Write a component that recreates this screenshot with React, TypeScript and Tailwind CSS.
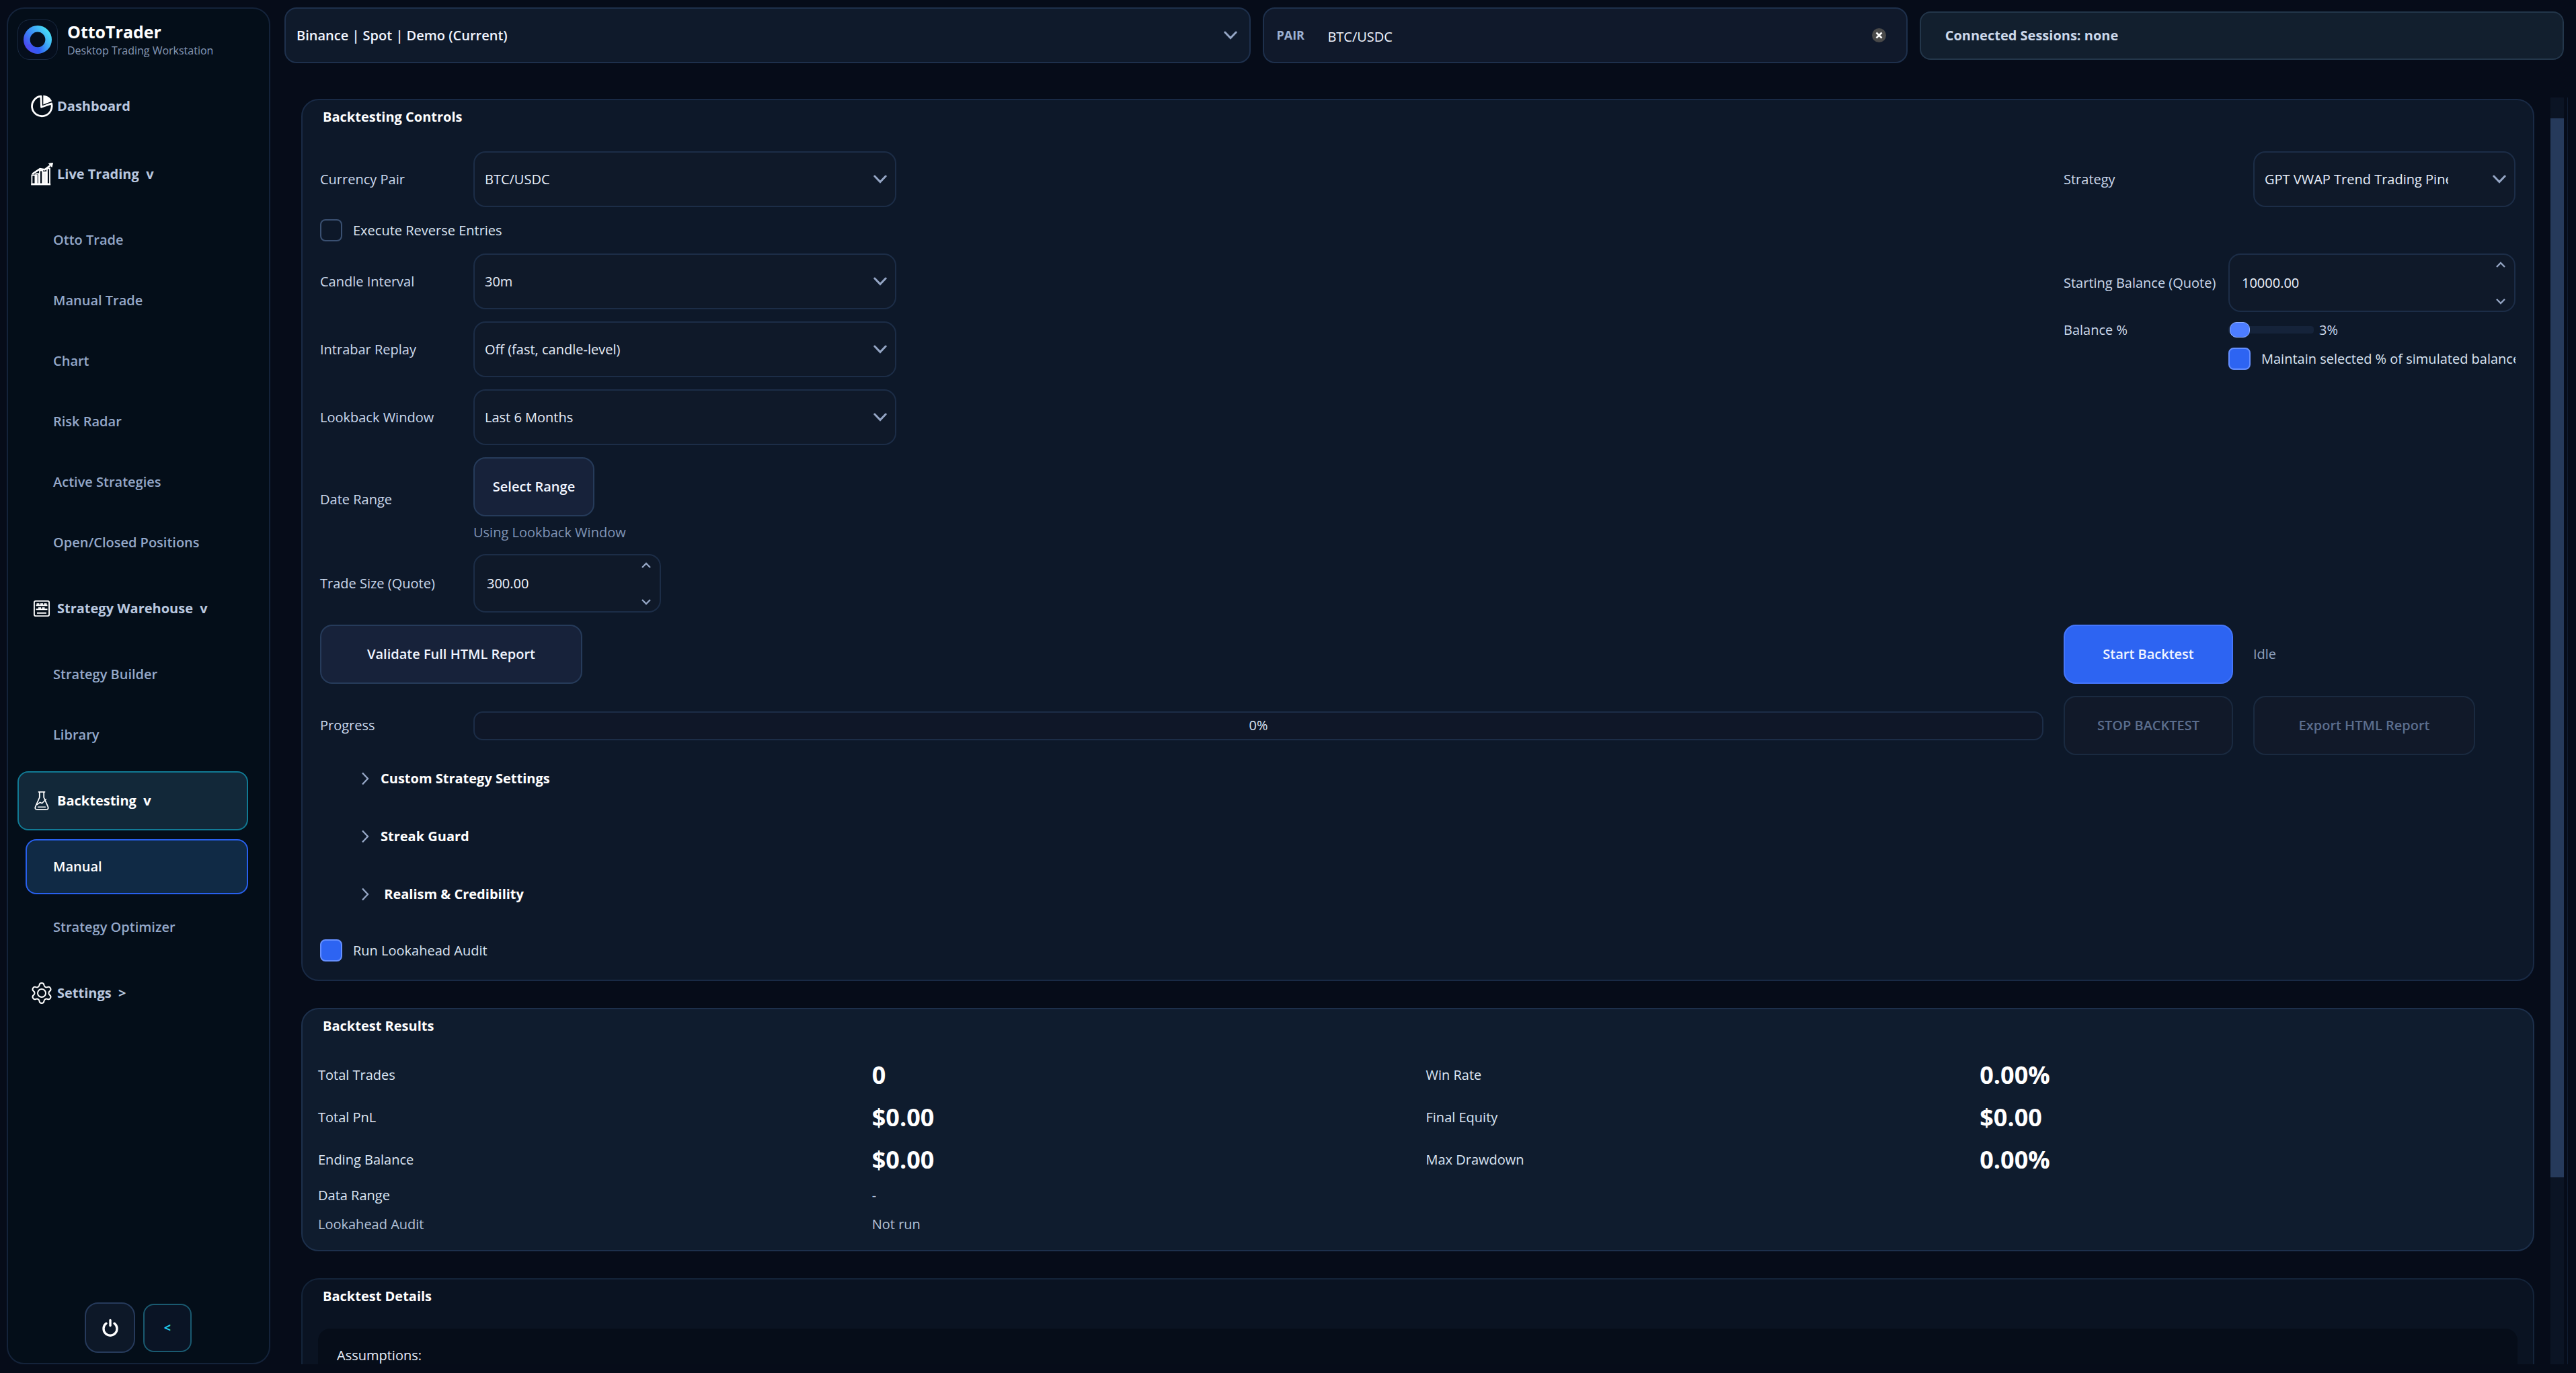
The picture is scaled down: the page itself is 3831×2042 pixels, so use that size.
import { useState } from "react";
import type { ReactNode } from "react";

const DashboardIcon = () => (
    <svg width="34" height="34" viewBox="0 0 34 34" fill="none">
        <path d="M16 2.2A14.8 14.8 0 1 0 31.6 13L16.5 18.2z" stroke="#fff" strokeWidth="2.8" strokeLinejoin="round" />
        <path d="M19.3 0.8C25 1 30 4.2 32.2 9.6L19.3 14.4z" fill="#fff" />
    </svg>
);

const LiveIcon = () => (
    <svg width="34" height="34" viewBox="0 0 34 34" fill="none" stroke="#fff">
        <path d="M2.4 18.5h5v13h-5zM8.5 16.5h4.2v15H8.5zM14 11.5h4.2v20H14zM19.5 14h4v17.5h-4zM25 8.5h4v23h-4z" strokeWidth="1.8" />
        <path d="M9.5 18v13M21.6 15v16" strokeWidth="2.6" />
        <path d="M1.2 32.2h29" strokeWidth="2.4" />
        <path d="M3 16.8l11.5-7.6 7 1.2 8-6" strokeWidth="2.6" />
        <path d="M27.5 1.2l6-.6-1.4 5.8z" fill="#fff" strokeWidth="1" />
    </svg>
);

const WarehouseIcon = () => (
    <svg width="26" height="26" viewBox="0 0 26 26" fill="none" stroke="#fff">
        <rect x="1.9" y="1.9" width="22.2" height="22.2" rx="2" strokeWidth="1.9" />
        <path d="M4.5 8.3h17M4.5 14.3h17M6 19.8h14" strokeWidth="2" />
        <path d="M5.5 6.4h4M11 6.4h4M16.5 6.4h4M8 12.4h4M13.5 12.4h4" strokeWidth="2.4" />
    </svg>
);

const FlaskIcon = () => (
    <svg width="22" height="30" viewBox="0 0 22 30" fill="none" stroke="#fff" strokeWidth="1.8" strokeLinecap="round" strokeLinejoin="round">
        <path d="M6.5 1.8h9M7.8 2v8L1.8 23.5c-1.2 2.8 0 4.7 2.6 4.7h13.2c2.6 0 3.8-1.9 2.6-4.7L14.2 10V2" />
        <path d="M4.5 20.5l4-3.2 3 1.4 5.8-6" strokeWidth="1.6" />
        <path d="M5.5 24.2h11" strokeWidth="1.4" />
    </svg>
);

const GearIcon = () => (
    <svg width="38" height="38" viewBox="0 0 24 24" fill="none" stroke="#fff" strokeWidth="1.3" strokeLinejoin="round">
        <path d="M9.671 4.136a2.34 2.34 0 0 1 4.659 0 2.34 2.34 0 0 0 3.319 1.915 2.34 2.34 0 0 1 2.33 4.033 2.34 2.34 0 0 0 0 3.831 2.34 2.34 0 0 1-2.33 4.033 2.34 2.34 0 0 0-3.319 1.915 2.34 2.34 0 0 1-4.659 0 2.34 2.34 0 0 0-3.32-1.915 2.34 2.34 0 0 1-2.33-4.033 2.34 2.34 0 0 0 0-3.831A2.34 2.34 0 0 1 6.35 6.051a2.34 2.34 0 0 0 3.319-1.915" />
        <circle cx="12" cy="12" r="4" />
    </svg>
);

const PowerIcon = () => (
    <svg width="26" height="28" viewBox="0 0 26 28" fill="none" stroke="#fff" strokeWidth="3.4" strokeLinecap="round">
        <path d="M13 2.5v8" />
        <path d="M7 7.2a10 10 0 1 0 12 0" />
    </svg>
);

const Logo = () => (
    <div className="flex h-15 w-15 items-center justify-center rounded-[18px] border border-[#1a2a42] bg-[#050e1c]">
        <svg width="44" height="44" viewBox="0 0 44 44" fill="none">
            <defs>
                <linearGradient id="ring" x1="4" y1="36" x2="38" y2="10" gradientUnits="userSpaceOnUse">
                    <stop offset="0" stopColor="#4a3df0" />
                    <stop offset="0.45" stopColor="#3b86f6" />
                    <stop offset="1" stopColor="#46dcf6" />
                </linearGradient>
                <linearGradient id="sweep" x1="6" y1="30" x2="40" y2="26" gradientUnits="userSpaceOnUse">
                    <stop offset="0" stopColor="#4f4cf2" />
                    <stop offset="0.5" stopColor="#2f5bf5" />
                    <stop offset="1" stopColor="#38b6f8" stopOpacity="0" />
                </linearGradient>
            </defs>
            <circle cx="22" cy="22" r="16.2" stroke="url(#ring)" strokeWidth="9.6" />
            <path d="M8 29.5a16.2 16.2 0 0 0 29 -1" stroke="url(#sweep)" strokeWidth="8.8" />
        </svg>
    </div>
);

const Chevron = ({ className = "" }: { className?: string }) => (
    <svg className={className} width="20" height="13" viewBox="0 0 20 13" fill="none" stroke="#94a5c4" strokeWidth="3" strokeLinecap="round">
        <path d="M1.8 2L10 10.5 18.2 2" />
    </svg>
);

type NavProps = { label: string; icon?: ReactNode; active?: boolean };

const NavItem = ({ label, icon, active }: NavProps) => (
    <button className={`flex h-22 w-full items-center gap-[5px] rounded-2xl border-2 pl-4 font-bold whitespace-pre ${active ? "border-[#117a94] bg-[#122839] text-white" : "border-transparent text-[#b9c7df]"}`}>
        <span className="flex w-9 justify-center">{icon}</span>
        {label}
    </button>
);

const SubItem = ({ label, active }: NavProps) => (
    <button className={`ml-3 flex h-[82px] items-center rounded-2xl border-2 pl-[39px] font-semibold ${active ? "border-[#2860ee] bg-[#102a45] text-white" : "border-transparent text-[#94a8c9]"}`}>
        {label}
    </button>
);

const SubList = ({ children }: { children: ReactNode }) => <div className="flex flex-col gap-2">{children}</div>;

const Sidebar = () => (
    <aside className="flex w-98 shrink-0 flex-col rounded-[26px] border-2 border-[#14233a] bg-[#040e19] pt-4 pr-[31px] pb-[15px] pl-3.5">
        <div className="flex items-center gap-3.5">
            <Logo />
            <div className="pt-1">
                <h1 className="text-[25px] leading-7 font-bold text-white">OttoTrader</h1>
                <p className="text-[16px] leading-7 font-medium text-[#8798b5]">Desktop Trading Workstation</p>
            </div>
        </div>
        <nav className="mt-[25px] flex flex-col gap-[13px]">
            <NavItem label="Dashboard" icon={<DashboardIcon />} />
            <NavItem label="Live Trading  v" icon={<LiveIcon />} />
            <SubList>
                <SubItem label="Otto Trade" />
                <SubItem label="Manual Trade" />
                <SubItem label="Chart" />
                <SubItem label="Risk Radar" />
                <SubItem label="Active Strategies" />
                <SubItem label="Open/Closed Positions" />
            </SubList>
            <NavItem label="Strategy Warehouse  v" icon={<WarehouseIcon />} />
            <SubList>
                <SubItem label="Strategy Builder" />
                <SubItem label="Library" />
            </SubList>
            <NavItem label="Backtesting  v" icon={<FlaskIcon />} active />
            <SubList>
                <SubItem label="Manual" active />
                <SubItem label="Strategy Optimizer" />
            </SubList>
            <NavItem label="Settings  >" icon={<GearIcon />} />
        </nav>
        <div className="mt-auto -mr-4 flex items-center justify-center gap-3">
            <button aria-label="Power" className="flex h-[75px] w-[75px] items-center justify-center rounded-[20px] border-2 border-[#263a5b] bg-[#0d1828]">
                <PowerIcon />
            </button>
            <button className="h-18 w-18 rounded-2xl border-2 border-[#1a5a70] bg-[#0a1425] text-[18px] font-bold text-[#22d3ee]">&lt;</button>
        </div>
    </aside>
);

const TopBar = () => (
    <header className="grid grid-cols-[3fr_2fr_2fr] items-center gap-[18px]">
        <div className="relative">
            <select aria-label="Session" className="h-[83px] w-full appearance-none rounded-[18px] border-2 border-[#1e304c] bg-[#0f1a2b] px-4 font-semibold text-[#f1f5ff]">
                <option>Binance | Spot | Demo (Current)</option>
            </select>
            <Chevron className="pointer-events-none absolute top-[35px] right-5" />
        </div>
        <div className="flex h-[83px] items-center rounded-[18px] border-2 border-[#1e304c] bg-[#10192b] pr-[30px] pl-[18px]">
            <label htmlFor="pair" className="w-[76px] text-[18px] font-bold text-[#9db2d3]">PAIR</label>
            <input id="pair" defaultValue="BTC/USDC" className="min-w-0 flex-1 bg-transparent pt-1 text-[#f1f5ff] outline-none" />
            <button aria-label="Clear" className="flex h-[21px] w-[21px] items-center justify-center rounded-full bg-[#4a4a4a]">
                <svg width="11" height="11" viewBox="0 0 11 11" stroke="#fff" strokeWidth="2.6">
                    <path d="M1.5 1.5l8 8M9.5 1.5l-8 8" />
                </svg>
            </button>
        </div>
        <div className="flex h-18 items-center rounded-2xl border-2 border-[#23364a] bg-[#121f2e] pl-9 font-bold text-[#ccd8ea]">
            Connected Sessions: none
        </div>
    </header>
);

const Select = ({ id, value, className = "px-[15px]" }: { id: string; value: string; className?: string }) => (
    <div className="relative">
        <select id={id} className={`h-[83px] w-full appearance-none rounded-[18px] border-2 border-[#1c2d47] bg-[#0f1929] text-[#e6edf9] ${className}`}>
            <option>{value}</option>
        </select>
        <Chevron className="pointer-events-none absolute top-[35px] right-3.5" />
    </div>
);

const Spin = ({ id, value }: { id: string; value: string }) => (
    <div className="flex h-[87px] w-full items-center rounded-[18px] border-2 border-[#1c2d47] bg-[#0f1929] pr-[13px] pl-[18px]">
        <input id={id} defaultValue={value} inputMode="decimal" className="min-w-0 flex-1 bg-transparent text-[#f1f5ff] outline-none" />
        <div className="flex h-16 flex-col justify-between">
            <button aria-label="Increase">
                <svg width="14" height="9" viewBox="0 0 14 9" fill="none" stroke="#94a5c4" strokeWidth="2.4"><path d="M1 8l6-6 6 6" /></svg>
            </button>
            <button aria-label="Decrease">
                <svg width="14" height="9" viewBox="0 0 14 9" fill="none" stroke="#94a5c4" strokeWidth="2.4"><path d="M1 1l6 6 6-6" /></svg>
            </button>
        </div>
    </div>
);

const Check = ({ label, checked }: { label: string; checked?: boolean }) => (
    <label className="flex h-[33px] items-center gap-4 whitespace-nowrap text-[#dbe5f4]">
        <input type="checkbox" defaultChecked={checked} className="h-[33px] w-[33px] shrink-0 appearance-none rounded-lg border-2 border-[#3a5071] bg-[#0d1829] checked:border-[#658fff] checked:bg-[#2d64f2]" />
        {label}
    </label>
);

const Label = ({ id, children }: { id?: string; children: ReactNode }) => (
    <label htmlFor={id} className="self-center whitespace-nowrap text-[#cbd8ec]">{children}</label>
);

const Panel = ({ title, className, children }: { title: string; className: string; children: ReactNode }) => (
    <section className={`rounded-[26px] border-2 pt-[11px] ${className}`}>
        <h2 className="pl-[30px] leading-7 font-bold text-white">{title}</h2>
        {children}
    </section>
);

const Fold = ({ label }: { label: string }) => (
    <button className="flex h-[34px] items-center gap-[17px] font-bold whitespace-pre text-white">
        <svg width="12" height="20" viewBox="0 0 12 20" fill="none" stroke="#94a5c4" strokeWidth="2.4">
            <path d="M2 1.5l8 8.5-8 8.5" />
        </svg>
        {label}
    </button>
);

const Controls = () => {
    const [balance, setBalance] = useState(3);
    return (
        <Panel title="Backtesting Controls" className="border-[#192a45] bg-[#0d1829] pb-[27px]">
            <div className="mt-[37px] grid grid-cols-[198px_1fr_672px] gap-x-[30px] gap-y-[18px] px-[26px]">
                <Label id="currency">Currency Pair</Label>
                <div className="w-[629px]"><Select id="currency" value="BTC/USDC" /></div>
                <div className="grid grid-cols-[252px_1fr] gap-[30px]">
                    <Label id="strategy">Strategy</Label>
                    <Select id="strategy" value="GPT VWAP Trend Trading Pine Script" className="pr-[98px] pl-[15px]" />
                </div>

                <div className="col-span-3"><Check label="Execute Reverse Entries" /></div>

                <Label id="candle">Candle Interval</Label>
                <div className="w-[629px]"><Select id="candle" value="30m" /></div>
                <div className="row-span-2 grid grid-cols-[245px_427px] content-start">
                    <Label id="start-balance">Starting Balance (Quote)</Label>
                    <Spin id="start-balance" value="10000.00" />
                    <div className="flex h-[53px] items-center"><Label id="balance">Balance %</Label></div>
                    <div className="flex items-center gap-2">
                        <input
                            id="balance"
                            type="range"
                            min={1}
                            max={100}
                            value={balance}
                            onChange={(e) => setBalance(Number(e.target.value))}
                            className="h-[11px] w-[127px] appearance-none rounded bg-[#15233a] [&::-webkit-slider-thumb]:h-[23px] [&::-webkit-slider-thumb]:w-[30px] [&::-webkit-slider-thumb]:appearance-none [&::-webkit-slider-thumb]:rounded-[10px] [&::-webkit-slider-thumb]:border [&::-webkit-slider-thumb]:border-[#8fb0ff] [&::-webkit-slider-thumb]:bg-[#4d7dff]"
                        />
                        <output htmlFor="balance" className="text-[#cbd8ec]">{balance}%</output>
                    </div>
                    <div className="col-start-2 overflow-hidden">
                        <Check label="Maintain selected % of simulated balance" checked />
                    </div>
                </div>

                <Label id="intrabar">Intrabar Replay</Label>
                <div className="w-[629px]"><Select id="intrabar" value="Off (fast, candle-level)" /></div>

                <Label id="lookback">Lookback Window</Label>
                <div className="col-span-2 w-[629px]"><Select id="lookback" value="Last 6 Months" /></div>

                <Label id="range">Date Range</Label>
                <div className="col-span-2">
                    <button id="range" className="h-22 w-[180px] rounded-[18px] border-2 border-[#263b5a] bg-[#17223a] font-semibold text-[#f1f5ff]">Select Range</button>
                    <p className="mt-2.5 leading-7 text-[#7f93b5]">Using Lookback Window</p>
                </div>

                <Label id="trade-size">Trade Size (Quote)</Label>
                <div className="col-span-2 w-[279px]"><Spin id="trade-size" value="300.00" /></div>

                <div className="col-span-2">
                    <button className="h-22 w-[390px] rounded-[18px] border-2 border-[#263b5a] bg-[#17223a] font-semibold text-[#f1f5ff]">Validate Full HTML Report</button>
                </div>
                <div className="flex items-center gap-[30px]">
                    <button className="h-22 w-[252px] rounded-[18px] border-2 border-[#4576fb] bg-[#2d64f2] font-semibold text-[#f1f5ff]">Start Backtest</button>
                    <span className="text-[#8fa1bf]">Idle</span>
                </div>

                <Label>Progress</Label>
                <div role="progressbar" aria-label="Progress" aria-valuenow={0} className="flex h-[43px] items-center justify-center self-center rounded-[14px] border-2 border-[#1c2d47] bg-[#0f1728] text-[#dbe5f4]">0%</div>
                <div className="flex items-center gap-[30px]">
                    <button disabled className="h-22 w-[252px] rounded-[18px] border-2 border-[#1a2a40] bg-[#111929] font-semibold text-[#5b6d8d]">STOP BACKTEST</button>
                    <button disabled className="h-22 w-[330px] rounded-[18px] border-2 border-[#1a2a40] bg-[#111929] font-semibold text-[#5b6d8d]">Export HTML Report</button>
                </div>
            </div>
            <div className="mt-[18px] flex flex-col items-start gap-[52px] pl-[87px]">
                <Fold label="Custom Strategy Settings" />
                <Fold label="Streak Guard" />
                <Fold label=" Realism & Credibility" />
            </div>
            <div className="mt-[50px] pl-[26px]"><Check label="Run Lookahead Audit" checked /></div>
        </Panel>
    );
};

const Big = ({ children }: { children: ReactNode }) => <dd className="text-[36px] leading-[49px] font-bold text-white">{children}</dd>;

const Results = () => (
    <Panel title="Backtest Results" className="border-[#1d304c] bg-[#0f1c2e] pb-6">
        <dl className="mt-[34px] grid grid-cols-4 items-center gap-x-6 gap-y-3.5 px-[23px] leading-[29px] text-[#dbe5f4]">
            <dt>Total Trades</dt>
            <Big>0</Big>
            <dt>Win Rate</dt>
            <Big>0.00%</Big>
            <dt>Total PnL</dt>
            <Big>$0.00</Big>
            <dt>Final Equity</dt>
            <Big>$0.00</Big>
            <dt>Ending Balance</dt>
            <Big>$0.00</Big>
            <dt>Max Drawdown</dt>
            <Big>0.00%</Big>
            <dt>Data Range</dt>
            <dd className="col-span-3 text-[#b4c2d8]">-</dd>
            <dt className="text-[#b4c2d8]">Lookahead Audit</dt>
            <dd className="col-span-3 text-[#b4c2d8]">Not run</dd>
        </dl>
    </Panel>
);

const Details = () => (
    <Panel title="Backtest Details" className="border-[#14243a] bg-[#0a1322] pb-6">
        <div className="mx-[23px] mt-[34px] h-[400px] rounded-[18px] bg-[#060d19] px-7 pt-[26px] leading-7 text-[#e6edf9]">Assumptions:</div>
    </Panel>
);

const App = () => (
    <div className="flex h-screen gap-[21px] overflow-hidden bg-[#060c19] pt-[11px] pr-3 pb-[13px] pl-2.5 font-['Open_Sans',sans-serif] text-[20px]">
        <Sidebar />
        <div className="flex min-w-0 flex-1 flex-col">
            <div className="pr-1.5"><TopBar /></div>
            <div className="mt-[51px] flex min-h-0 flex-1 border-r border-[#111d33] pr-[5px]">
                <main className="flex min-w-0 flex-1 flex-col gap-10 overflow-hidden pt-0.5 pr-6 pl-[25px] *:shrink-0">
                    <Controls />
                    <Results />
                    <Details />
                </main>
                <div className="w-5 bg-[#0b1424] pt-[31px]">
                    <div className="h-[85%] bg-[#263a5b]" />
                </div>
            </div>
        </div>
    </div>
);

export default App;
